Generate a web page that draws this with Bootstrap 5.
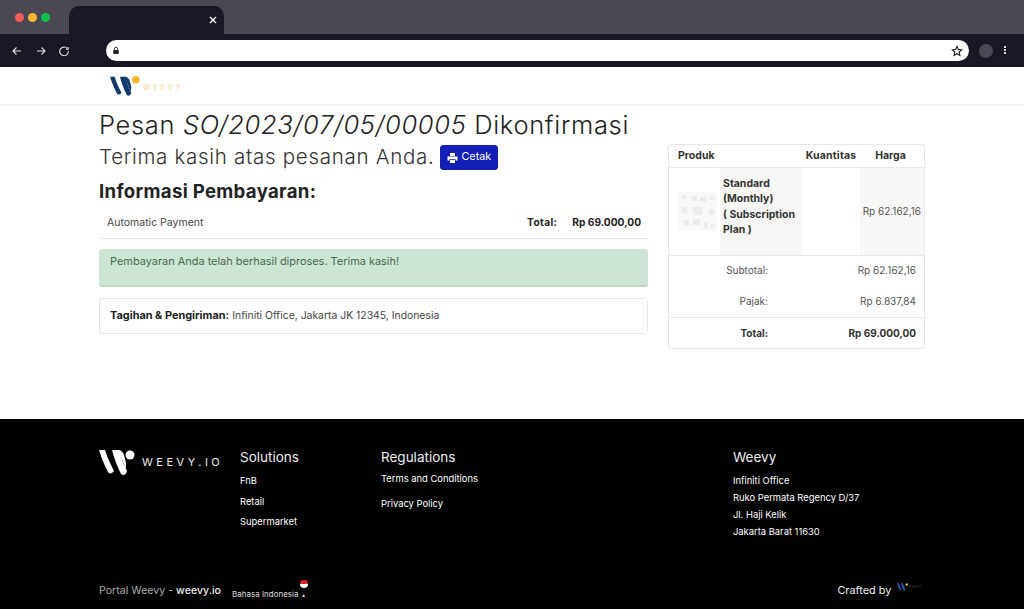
<!DOCTYPE html>
<html lang="id">
<head>
<meta charset="utf-8">
<title>Weevy</title>
<link rel="stylesheet" href="https://cdn.jsdelivr.net/npm/bootstrap@5.3.0/dist/css/bootstrap.min.css">
<style>
html,body{height:609px;overflow:hidden}
body{font-family:Inter,"Liberation Sans",sans-serif;background:#fff;color:#212529;font-size:10px}
.tabstrip{height:34px;background:#4b4854;padding:6px 0 0 69px;position:relative}
.dots{position:absolute;left:15px;top:13px}
.dots i{display:block;width:9px;height:9px;border-radius:50%}
.tabshape{width:155px;height:28px;background:#1b1826;border-radius:10px 10px 0 0;padding:9px 6px 0 0;color:#fff}
.toolbar{height:33px;background:#1b1826;padding:0 17px 0 12px}
.urlbar{width:865px;height:21px;background:#fff;border-radius:11px;margin-left:37px;padding:0 6px 0 6px}
.toolicon{width:10px;height:10px;display:block;flex:none}
.lockicon{width:8px;height:9px;display:block;flex:none}
.gapfwd{margin-left:14px}
.gapreload{margin-left:13px}
.avatar{width:14px;height:14px;border-radius:50%;background:#4b4854;margin-left:10px}
.menudots{margin-left:11px;width:3px}
.menudots i{display:block;width:2px;height:2px;background:#ddd;margin-bottom:1px}
.topnav{height:37px;box-shadow:0 1px 3px rgba(0,0,0,.1);padding:9px 0 0 110px}
.brandtxt{font-size:7px;letter-spacing:3.1px;color:#f8dca0;margin:7px 0 0 1px;font-weight:500}
.pagebody{height:315px;padding:4px 99px 0}
.pagetitle{font-size:25.5px;line-height:34px;font-weight:300;margin:0;letter-spacing:.66px;color:#222}
.leftcol{width:549px}
.rightcol{width:257px;margin-left:20px;margin-top:2px}
.thanksrow{margin-top:2px}
.thanks{font-size:20.5px;line-height:26px;margin:0;letter-spacing:.71px;color:#333;font-weight:300}
.printbtn{background:#1320b5;border-color:#1320b5;color:#fff;font-size:10.8px;padding:0 6px;width:58px;height:25px;border-radius:3px;margin:1px 0 0 6px;display:flex;align-items:center;gap:3px}
.payhead{font-size:18.6px;font-weight:700;margin:9px 0 0;line-height:24px;letter-spacing:.32px;color:#222}
.payrow{height:36px;border-bottom:1px solid #e3e6e8;padding:5px 7px 0 8px;font-size:10.5px;color:#444}
.payrow b{color:#222;font-size:10.2px}
.payrow b.tot{letter-spacing:.35px}
.paid{height:37.5px;background:#cde5d3;border:0;border-bottom:2px solid #bdd9c5;border-radius:3px;color:#4a6b53;font-size:10.95px;padding:4px 11px;margin:10px 0 11px}
.billing{height:36px;border:1px solid #e6e8ea;border-radius:3px;padding:0 10px;font-size:10.4px;color:#444;display:flex;align-items:center;white-space:nowrap}
.billing b{color:#222;margin-right:3px;font-size:10.9px}
.sumcard{border:1px solid #e6e8ea;border-radius:3px;font-size:10px;color:#555;height:205px}
.sumhead{height:23px;border-bottom:1px solid #e6e8ea;font-weight:700;color:#333;font-size:10.5px;align-items:center}
.prodrow{height:88px;border-bottom:1px solid #e6e8ea}
.c1{width:51px;flex:none;padding-left:9px}
.c2{width:82px;flex:none;background:#f7f8f6;padding:8px 3px;font-weight:700;color:#333;line-height:15.3px;font-size:10.5px}
.c3{width:58px;flex:none}
.c4{flex:1;background:#f7f8f6;padding-right:3px;white-space:nowrap}
.thumb{width:39px;height:39px;border-radius:2px}
.sumrow{height:31.5px;align-items:center}
.sumrow.first{height:29.5px}
.sumrow.top{border-top:1px solid #e6e8ea;height:31px}
.lab{width:99px;text-align:right}
.val{flex:1;text-align:right;padding-right:8px}
.bottomfoot{height:190px;background:#000;color:#fff;padding:0 99px;position:relative}
.footcols{padding-top:30px;height:150px}
.fcol1{width:141px}
.fcol2{width:141px}
.fcol3{width:352px}
.foothead{font-size:13.5px;line-height:16px;font-weight:400;margin:0 0 6px;color:#eee}
.footlink{font-size:9.4px;line-height:20.6px;color:#fff;display:block;text-decoration:none}
.regblock{margin-top:-5.5px}
.footlink.wide{line-height:25px}
.addrblock{padding-top:1px}
.footlink.addr{line-height:17px}
.wordmark{font-size:11px;letter-spacing:3.5px;color:#eee;margin:6px 0 0 6px;line-height:14px}
.footbar{height:40px;font-size:10.5px}
.portal{color:#aaa;padding-top:3px;letter-spacing:.05px}
.portal b{font-weight:500;color:#eee}
.langblock{font-size:8px;color:#ddd;margin-left:11px;line-height:10px;padding-top:2px}
.crafted{margin-left:auto;margin-right:3px;padding-top:3px;color:#eee;font-size:10.9px;display:flex;align-items:center;gap:6px}
.craftmark{margin-bottom:6px}
.miniw{font-size:3px;letter-spacing:.6px;color:#555}
.flagdot{width:8px;height:8px;border-radius:50%;display:block;margin:0 0 1px 68px;background:linear-gradient(#e02828 50%,#fff 50%)}
.arrowgap{margin-left:3px;font-size:6px}
</style>
</head>
<body>
<div class="tabstrip">
  <div class="dots d-flex gap-1"><i style="background:#f45c5c"></i><i style="background:#fbb62e"></i><i style="background:#0fbf4a"></i></div>
  <div class="tabshape d-flex justify-content-end">
    <svg class="toolicon" viewBox="0 0 10 10"><path d="M2 2l6 6M8 2l-6 6" stroke="#fff" stroke-width="1.4"/></svg>
  </div>
</div>
<div class="toolbar d-flex align-items-center">
  <svg class="toolicon" viewBox="0 0 10 10" fill="none" stroke="#ddd" stroke-width="1.1"><path d="M9 5H1M4.500 1.500L1 5l3.500 3.500"/></svg>
  <svg class="toolicon gapfwd" viewBox="0 0 10 10" fill="none" stroke="#ddd" stroke-width="1.1"><path d="M1 5h8M5.500 1.500L9 5 5.500 8.500"/></svg>
  <svg class="toolicon gapreload" viewBox="0 0 10 10" fill="none" stroke="#ddd" stroke-width="1.1"><path d="M8.300 2.600A4.300 4.300 0 1 0 9.300 5"/><path d="M9.200 1v2.200H7"/></svg>
  <div class="urlbar d-flex align-items-center justify-content-between">
    <svg class="lockicon" viewBox="0 0 10 10"><rect x="1.500" y="4.500" width="7" height="5" rx="1" fill="#222"/><path d="M3 5V3a2 2 0 0 1 4 0v2" fill="none" stroke="#222" stroke-width="1.100"/></svg>
    <svg style="width:12px;height:12px" viewBox="0 0 24 24" fill="none" stroke="#222" stroke-width="2.400"><path d="M12 3l2.800 5.900 6.400.8-4.700 4.400 1.200 6.400L12 17.300l-5.700 3.200 1.200-6.400L2.800 9.700l6.400-.8z"/></svg>
  </div>
  <div class="avatar"></div>
  <div class="menudots"><i></i><i></i><i></i></div>
</div>
<div class="topnav d-flex">
  <svg width="32" height="20.500" viewBox="0 0 42 27"><g fill="#123a6f"><path d="M0 1H6C8 8 12 16 15 22C13 25 10 25 9 23C5 15 2 8 0 1z"/><path d="M13 1H20C22 8 25 16 28 22C27 26 24 27 22 25C18 17 15 9 13 1z"/><path d="M19 1C23 1 25 3 26 7L28 14C28 17 27 20 27 20L20 3z"/></g><circle cx="34" cy="5" r="5" fill="#fbb62e"/></svg>
  <span class="brandtxt">WEEVY</span>
</div>
<div class="pagebody">
  <h1 class="pagetitle">Pesan <em>SO/2023/07/05/00005</em> Dikonfirmasi</h1>
  <div class="d-flex">
    <div class="leftcol">
      <div class="thanksrow d-flex align-items-center">
        <h2 class="thanks">Terima kasih atas pesanan Anda.</h2>
        <a class="btn printbtn" href="#">
          <svg width="11" height="10" viewBox="0 0 11 10" fill="#fff" style="flex:none"><path d="M3 0h5v3H3zM0.500 3.500h10v4H8.500V6h-6v1.500h-2zM3 6.800h5V10H3z"/></svg>
          Cetak
        </a>
      </div>
      <h3 class="payhead">Informasi Pembayaran:</h3>
      <div class="payrow d-flex align-items-center">
        <span>Automatic Payment</span>
        <b class="tot ms-auto">Total:</b>
        <b style="margin-left:15px">Rp 69.000,00</b>
      </div>
      <div class="alert paid">Pembayaran Anda telah berhasil diproses. Terima kasih!</div>
      <div class="billing"><b>Tagihan &amp; Pengiriman:</b> Infiniti Office, Jakarta JK 12345, Indonesia</div>
    </div>
    <div class="rightcol">
      <div class="sumcard">
        <div class="sumhead d-flex">
          <span style="padding-left:9px;width:136px">Produk</span>
          <span style="width:52px;text-align:center;letter-spacing:.2px">Kuantitas</span>
          <span style="flex:1;text-align:center">Harga</span>
        </div>
        <div class="prodrow d-flex">
          <div class="c1 d-flex align-items-center">
            <svg class="thumb" viewBox="0 0 39 39"><rect width="39" height="39" fill="#f8f8f8"/><g fill="#ececec"><rect x="15" y="15" width="9" height="8"/><rect x="14" y="4" width="5" height="5"/><rect x="22" y="5" width="6" height="5"/><rect x="4" y="15" width="5" height="6"/><rect x="31" y="17" width="5" height="6"/><rect x="6" y="28" width="5" height="5"/><rect x="15" y="27" width="7" height="6"/><rect x="26" y="30" width="4" height="6"/><circle cx="6" cy="5" r="2"/><circle cx="34" cy="6" r="2"/><circle cx="34" cy="34" r="2"/></g></svg>
          </div>
          <div class="c2">Standard (Monthly)<br>( Subscription Plan )</div>
          <div class="c3"></div>
          <div class="c4 d-flex align-items-center justify-content-end">Rp 62.162,16</div>
        </div>
        <div class="sumrow first d-flex"><span class="lab">Subtotal:</span><span class="val">Rp 62.162,16</span></div>
        <div class="sumrow d-flex"><span class="lab">Pajak:</span><span class="val">Rp 6.837,84</span></div>
        <div class="sumrow top d-flex fw-bold" style="color:#333"><span class="lab">Total:</span><span class="val">Rp 69.000,00</span></div>
      </div>
    </div>
  </div>
</div>
<div class="bottomfoot">
  <div class="footcols d-flex">
    <div class="fcol1 d-flex align-items-start">
      <svg width="37" height="27" viewBox="0 0 37 27" style="flex:none"><g fill="#fff"><path d="M0 1H6C8 8 12 16 15 22C13 25 10 25 9 23C5 15 2 8 0 1z"/><path d="M13 1H20C22 8 25 16 28 22C27 26 24 27 22 25C18 17 15 9 13 1z"/><path d="M19 1C22 1 24 3 25 6L27 14C27 17 27 20 27 20L20 3z"/></g><circle cx="31" cy="6" r="4.500" fill="#fff"/></svg>
      <span class="wordmark">WEEVY.IO</span>
    </div>
    <div class="fcol2">
      <h4 class="foothead">Solutions</h4>
      <a class="footlink" href="#">FnB</a>
      <a class="footlink" href="#">Retail</a>
      <a class="footlink" href="#">Supermarket</a>
    </div>
    <div class="fcol3">
      <h4 class="foothead">Regulations</h4>
      <div class="regblock">
        <a class="footlink wide" href="#">Terms and Conditions</a>
        <a class="footlink wide" href="#">Privacy Policy</a>
      </div>
    </div>
    <div>
      <h4 class="foothead">Weevy</h4>
      <div class="addrblock">
        <span class="footlink addr">Infiniti Office</span>
        <span class="footlink addr">Ruko Permata Regency D/37</span>
        <span class="footlink addr">Jl. Haji Kelik</span>
        <span class="footlink addr">Jakarta Barat 11630</span>
      </div>
    </div>
  </div>
  <div class="footbar d-flex align-items-center">
    <span class="portal">Portal Weevy - <b>weevy.io</b></span>
    <div class="langblock">
      <i class="flagdot"></i>
      Bahasa Indonesia<span class="arrowgap">&#9652;</span>
    </div>
    <div class="crafted">Crafted by
      <span class="craftmark d-flex align-items-center">
        <svg width="11" height="8" viewBox="0 0 37 27"><g fill="#2a5bb0"><path d="M0 1H6C8 8 12 16 15 22C13 25 10 25 9 23C5 15 2 8 0 1z"/><path d="M13 1H20C22 8 25 16 28 22C27 26 24 27 22 25C18 17 15 9 13 1z"/></g><circle cx="33" cy="5" r="4" fill="#fbb62e"/></svg>
        <span class="miniw">WEEVY</span>
      </span>
    </div>
  </div>
</div>
<script src="https://cdn.jsdelivr.net/npm/bootstrap@5.3.0/dist/js/bootstrap.bundle.min.js"></script>
</body>
</html>
